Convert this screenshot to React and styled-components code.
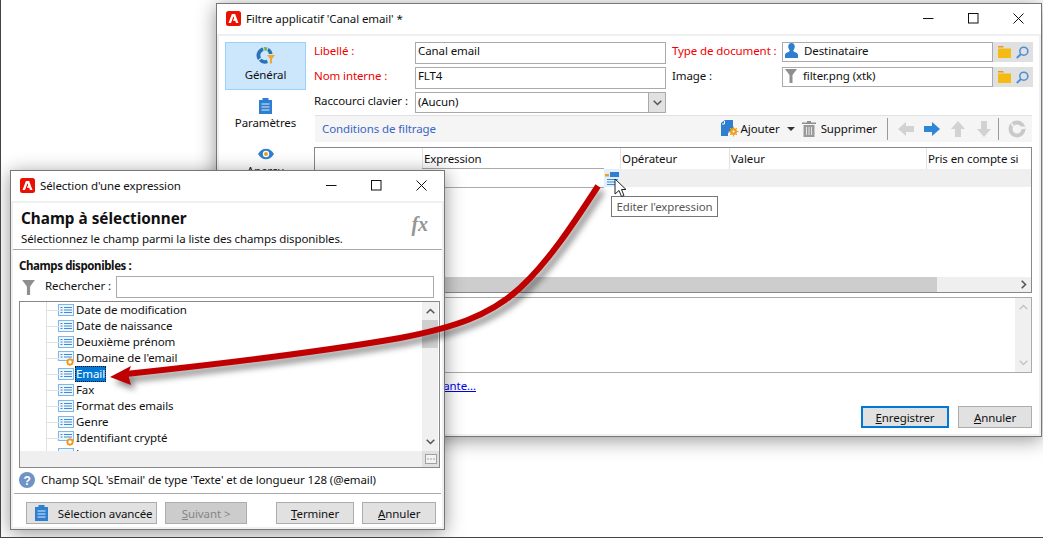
import React from 'react'
import styled, { createGlobalStyle } from 'styled-components'

const Global = createGlobalStyle`
    html, body { margin: 0; padding: 0; background: #fff; overflow: hidden; }
    body { font-family: 'Noto Sans', 'Open Sans', sans-serif; font-size: 11.5px; letter-spacing: -0.1px; color: #111; }
`

const Stage = styled.div`
    position: relative;
    width: 1043px;
    height: 538px;
    box-sizing: border-box;
    border-left: 1px solid #444;
    border-bottom: 1px solid #444;
    overflow: hidden;
    background: #fff;
`

const Window = styled.div`
    position: absolute;
    left: ${({ $x }) => $x}px;
    top: ${({ $y }) => $y}px;
    width: ${({ $w }) => $w}px;
    height: ${({ $h }) => $h}px;
    box-sizing: border-box;
    display: flex;
    flex-direction: column;
    background: #f0f0f0;
    border: 1px solid #777;
    box-shadow: 0 3px 18px rgba(0, 0, 0, 0.42);
`

const TitleBar = styled.div`
    height: 30px;
    flex: none;
    box-sizing: border-box;
    background: #fff;
    display: flex;
    align-items: center;
    padding: 0 0 2px 9px;
    gap: 5px;
`

const TitleText = styled.div`
    flex: 1;
    white-space: nowrap;
`

const WinButtons = styled.div`
    display: flex;
    align-items: center;
    padding-right: 17px;
    gap: 34px;
`

const Content = styled.div`
    flex: 1;
    min-height: 0;
    margin: 2px;
    background: #fff;
    display: flex;
    flex-direction: column;
`

const FilterBody = styled(Content)`
    flex-direction: row;
    padding: 6px 6px 0 6px;
    gap: 8px;
`

const Sidebar = styled.div`
    width: 81px;
    flex: none;
    display: flex;
    flex-direction: column;
`

const SideItem = styled.div`
    height: 48px;
    box-sizing: border-box;
    display: flex;
    flex-direction: column;
    align-items: center;
    justify-content: flex-end;
    gap: 1px;
    padding-bottom: 7px;
    background: ${({ $active }) => ($active ? '#cce6fb' : 'transparent')};
    border: 1px solid ${({ $active }) => ($active ? '#9ad0fa' : 'transparent')};
`

const Main = styled.div`
    flex: 1;
    min-width: 0;
    display: flex;
    flex-direction: column;
`

const FormGrid = styled.div`
    display: grid;
    grid-template-columns: 101px 251px 6px 110px 211px 40px;
    grid-template-rows: 22px 22px 21px;
    row-gap: 3px;
    align-items: start;
`

const Label = styled.div`
    line-height: 18px;
    white-space: nowrap;
    color: ${({ $req }) => ($req ? '#f00000' : '#111')};
    grid-column: ${({ $col }) => $col};
`

const Input = styled.div`
    box-sizing: border-box;
    height: ${({ $h }) => $h || 22}px;
    border: 1px solid #aaa;
    background: #fff;
    display: flex;
    align-items: center;
    gap: 6px;
    padding: 0 0 ${({ $pb }) => $pb || 0}px 2px;
    white-space: nowrap;
    grid-column: ${({ $col }) => $col};
`

const Combo = styled(Input)`
    justify-content: space-between;
    padding-bottom: 0;
`

const ComboText = styled.span`
    margin-bottom: 2px;
`

const ComboArrow = styled.div`
    width: 16px;
    height: 100%;
    background: #e1e1e1;
    border-left: 1px solid #aaa;
    display: flex;
    align-items: center;
    justify-content: center;
`

const PickIcons = styled.div`
    height: 20px;
    background: #e0e0e0;
    display: flex;
    align-items: center;
    justify-content: space-around;
    padding: 0 2px;
    grid-column: ${({ $col }) => $col};
`

const Toolbar = styled.div`
    height: 27px;
    box-sizing: border-box;
    margin: 2px 1px 5px 1px;
    padding: 0 6px 1px 7px;
    background: #f5f5f5;
    border-top: 1px solid #e0e0e0;
    display: flex;
    align-items: center;
`

const ToolbarTitle = styled.div`
    flex: 1;
    color: #3a66c4;
`

const ToolText = styled.div`
    margin: 0 ${({ $mr }) => $mr}px 0 ${({ $ml }) => $ml}px;
`

const ToolSep = styled.div`
    width: 1px;
    height: 22px;
    background: #999;
    margin: 0 ${({ $mr }) => $mr}px 0 ${({ $ml }) => $ml}px;
`

const CaretSlot = styled.div`
    display: flex;
    margin-right: 7px;
`

const ArrowGroup = styled.div`
    display: flex;
    gap: 10px;
`

const GridBox = styled.div`
    height: 146px;
    box-sizing: border-box;
    border: 1px solid #87878c;
    margin-right: 1px;
    display: flex;
    flex-direction: column;
`

const GridHead = styled.div`
    height: 21px;
    flex: none;
    display: grid;
    grid-template-columns: 107px 198px 109px 197px 1fr;
`

const HeadCell = styled.div`
    padding-left: 1px;
    line-height: 21px;
    white-space: nowrap;
    border-left: ${({ $first }) => ($first ? 'none' : '1px solid #e2e2e2')};
`

const GridRow = styled.div`
    height: 18px;
    flex: none;
    display: flex;
    margin-left: 107px;
    background: #efefef;
`

const ExprCell = styled.div`
    width: 182px;
    box-sizing: border-box;
    height: 20px;
    margin-top: -1px;
    background: #fff;
    border-top: 1px solid #aaa;
    border-bottom: 1px solid #aaa;
`

const EditButton = styled.div`
    width: 16px;
    background: #e3f0fb;
    display: flex;
    justify-content: center;
    padding-top: 3px;
    box-sizing: border-box;
`

const GridFill = styled.div`
    flex: 1;
`

const HScroll = styled.div`
    height: 15px;
    flex: none;
    background: #efefef;
    display: flex;
    align-items: center;
`

const HThumb = styled.div`
    width: 622px;
    height: 100%;
    background: #cdcdcd;
`

const ScrollEnd = styled.div`
    margin-left: auto;
    margin-right: 4px;
    display: flex;
`

const NoteBox = styled.div`
    height: 76px;
    box-sizing: border-box;
    margin: 4px 1px 0 0;
    border: 1px solid #aaa;
    display: flex;
    justify-content: flex-end;
`

const NoteScroll = styled.div`
    width: 16px;
    background: #f0f0f0;
    display: flex;
    flex-direction: column;
    justify-content: space-between;
    align-items: center;
    padding: 6px 0;
    box-sizing: border-box;
`

const LinkLine = styled.a`
    display: block;
    width: 162px;
    margin-top: 4px;
    height: 29px;
    line-height: 18px;
    text-align: right;
    color: #0000ee;
    text-decoration: underline;
    white-space: nowrap;
`

const FilterButtons = styled.div`
    display: flex;
    justify-content: flex-end;
    gap: 9px;
    margin-right: 1px;
`

const Button = styled.div`
    height: 22px;
    width: ${({ $w }) => $w}px;
    box-sizing: border-box;
    display: flex;
    align-items: center;
    justify-content: center;
    gap: 10px;
    white-space: nowrap;
    background: ${({ $off }) => ($off ? '#cccccc' : '#e1e1e1')};
    color: ${({ $off }) => ($off ? '#858585' : '#111')};
    border: ${({ $main }) => ($main ? '2px solid #0078d7' : '1px solid #adadad')};
    margin-left: ${({ $ml }) => $ml || 0}px;
`

const AdvancedButton = styled(Button)`
    padding-left: 4px;
`

const DialogHead = styled.div`
    height: 47px;
    flex: none;
    box-sizing: border-box;
    padding: 6px 14px 0 8px;
    border-bottom: 1px solid #a8a8a8;
    display: flex;
    justify-content: space-between;
`

const HeadTitle = styled.div`
    font-size: 15.3px;
    letter-spacing: 0;
    font-weight: 700;
    line-height: 19px;
`

const HeadSub = styled.div`
    margin-top: 3px;
    line-height: 16px;
`

const FxMark = styled.div`
    font-family: 'Liberation Serif', serif;
    font-style: italic;
    font-weight: 700;
    font-size: 20px;
    color: #959595;
    margin-top: 4px;
`

const DialogBody = styled.div`
    flex: none;
    padding: 7px 2px 0 6px;
`

const SectionTitle = styled.div`
    font-weight: 700;
    letter-spacing: -0.4px;
    line-height: 17px;
`

const SearchRow = styled.div`
    display: flex;
    align-items: center;
    margin-top: 2px;
    padding-left: 3px;
    height: 22px;
`

const SearchLabel = styled.div`
    width: 71px;
    margin: 0 0 4px 10px;
`

const SearchInput = styled.div`
    width: 318px;
    height: 22px;
    box-sizing: border-box;
    border: 1px solid #aaa;
`

const TreeBox = styled.div`
    width: 421px;
    height: 167px;
    box-sizing: border-box;
    margin-top: 3px;
    border: 1px solid #87878c;
    display: flex;
    flex-direction: column;
`

const TreeMain = styled.div`
    height: 149px;
    flex: none;
    display: flex;
`

const TreeList = styled.div`
    flex: 1;
    overflow: hidden;
    padding-left: 38px;
`

const TreeRow = styled.div`
    position: relative;
    height: 16px;
    display: flex;
    align-items: center;
    white-space: nowrap;
    gap: 1px;
    &::before {
        content: '';
        position: absolute;
        left: -12px;
        top: 0;
        bottom: 0;
        width: 12px;
        border-left: 1px solid #e0e0e0;
        background: linear-gradient(#e0e0e0, #e0e0e0) no-repeat 0 8px / 12px 1px;
    }
`

const RowText = styled.span`
    padding: 0 1px;
    line-height: 16px;
    height: 16px;
    box-sizing: border-box;
    ${({ $selected }) => $selected && `
        background: #0078d7;
        color: #fff;
        outline: 1px dotted #111;
        outline-offset: -1px;
    `}
`

const TreeScroll = styled.div`
    width: 16px;
    flex: none;
    margin-right: 1px;
    background: #f0f0f0;
    box-sizing: border-box;
    padding: 6px 0;
    display: flex;
    flex-direction: column;
    align-items: center;
    justify-content: space-between;
    position: relative;
`

const TreeThumb = styled.div`
    position: absolute;
    top: 18px;
    left: 0;
    width: 16px;
    height: 28px;
    background: #cfcfcf;
`

const TreeFoot = styled.div`
    flex: 1;
    background: #efefef;
    display: flex;
    justify-content: flex-end;
`

const DotsButton = styled.div`
    width: 17px;
    background: #e0e0e0;
    display: flex;
    align-items: center;
    justify-content: center;
`

const HelpRow = styled.div`
    height: 25px;
    box-sizing: border-box;
    padding-bottom: 2px;
    display: flex;
    align-items: center;
    gap: 6px;
`

const DialogFoot = styled.div`
    flex: 1;
    margin: 0 1px;
    border-top: 1px solid #a8a8a8;
    padding: 8px 5px 0 12px;
    display: flex;
    align-items: flex-start;
    gap: 8px;
`

const Tooltip = styled.div`
    position: absolute;
    left: 610px;
    top: 196px;
    width: 107px;
    height: 21px;
    box-sizing: border-box;
    border: 1px solid #767676;
    background: #fff;
    color: #575757;
    display: flex;
    align-items: center;
    justify-content: center;
    white-space: nowrap;
`

const ArrowOverlay = styled.svg`
    position: absolute;
    left: -1px;
    top: 0;
    pointer-events: none;
    filter: drop-shadow(4px 5px 3px rgba(0, 0, 0, 0.45));
`

const Cursor = styled.svg`
    position: absolute;
    left: 613px;
    top: 178px;
`

const BrandIcon = () => (
    <svg width="15" height="15" viewBox="0 0 15 15">
        <rect width="15" height="15" rx="2.5" fill="#eb1000" />
        <path d="M5.9 3h3.2l3.4 9h-2.5l-.8-2.3H6.900L8.200 7 7.500 5.200 5 12H2.500z" fill="#fff" />
    </svg>
)

const MinIcon = () => (
    <svg width="11" height="11" viewBox="0 0 11 11">
        <path d="M0 5.500h10.500" stroke="#111" fill="none" />
    </svg>
)

const MaxIcon = () => (
    <svg width="11" height="11" viewBox="0 0 11 11">
        <rect x=".5" y=".5" width="9.500" height="9.500" stroke="#111" fill="none" />
    </svg>
)

const CloseIcon = () => (
    <svg width="11" height="11" viewBox="0 0 11 11">
        <path d="M.5.5l10 10M10.500.5l-10 10" stroke="#111" fill="none" />
    </svg>
)

const GeneralIcon = () => (
    <svg width="22" height="20" viewBox="0 0 22 20">
        <path d="M8 1.500a8 8 0 0 0-5 12.500l3-2.400A4.500 4.500 0 0 1 8.500 5z" fill="#2d72b8" />
        <path d="M9 1a8 8 0 0 1 3.500.6L11.300 5A4.500 4.500 0 0 0 9.500 4.600z" fill="#6cb33f" />
        <path d="M13.500 2a8 8 0 0 1 4 6h-3.600a4.500 4.500 0 0 0-1.700-3z" fill="#2d72b8" />
        <path d="M3.800 14.800A8 8 0 0 0 13 17l-1.300-3.300a4.500 4.500 0 0 1-5-1z" fill="#2d72b8" />
        <path d="M12 9h8l-3 4v4l-2 1v-5z" fill="#f0a92a" />
    </svg>
)

const ClipboardIcon = () => (
    <svg width="13" height="16" viewBox="0 0 13 16">
        <path d="M0 2h3.500V0h6v2H13v14H0z" fill="#2f7fd0" />
        <path d="M2.500 6h8M2.500 9h8M2.500 12h8" stroke="#dcebf9" strokeWidth="1.200" />
    </svg>
)

const EyeIcon = () => (
    <svg width="16" height="16" viewBox="0 0 16 16">
        <path d="M0 8c4-7 12-7 16 0-4 7-12 7-16 0z" fill="#2f7fd0" />
        <circle cx="8" cy="8" r="3.200" fill="#fff" />
        <circle cx="8" cy="8" r="2" fill="#f0a020" />
    </svg>
)

const PersonIcon = () => (
    <svg width="13" height="15" viewBox="0 0 13 15">
        <path d="M6.500 0c2 0 3.300 1.500 3.300 3.600 0 1.500-.7 2.800-1.400 3.600-.2.800.3 1.300 1.300 1.700 1.900.7 3.300 1.300 3.300 3V15H0v-3.100c0-1.700 1.400-2.300 3.300-3 1-.4 1.500-.9 1.300-1.700-.7-.8-1.400-2.100-1.400-3.600C3.200 1.500 4.500 0 6.500 0z" fill="#2f7fd0" />
    </svg>
)

const FunnelIcon = ({ w = 12, h = 14 }) => (
    <svg width={w} height={h} viewBox="0 0 12 14">
        <path d="M0 0h12L7.500 6v8h-3V6z" fill="#8f8f8f" />
    </svg>
)

const FolderIcon = () => (
    <svg width="13" height="12" viewBox="0 0 13 12">
        <path d="M0 0h5l1 1.500H0z" fill="#e99a1c" />
        <path d="M0 2.500h13V12H0z" fill="#f3bb13" />
    </svg>
)

const SearchIcon = () => (
    <svg width="13" height="13" viewBox="0 0 13 13">
        <circle cx="7.800" cy="5.200" r="4" stroke="#4a90d9" strokeWidth="1.600" fill="none" />
        <path d="M5 8L.8 12" stroke="#4a90d9" strokeWidth="2" />
    </svg>
)

const ChevronDown = ({ color = '#555' }) => (
    <svg width="9" height="6" viewBox="0 0 9 6">
        <path d="M.7 .7L4.500 4.500 8.300 .7" stroke={color} strokeWidth="1.500" fill="none" />
    </svg>
)

const ChevronUp = ({ color = '#555' }) => (
    <svg width="9" height="6" viewBox="0 0 9 6">
        <path d="M.7 5.300L4.500 1.500 8.300 5.300" stroke={color} strokeWidth="1.500" fill="none" />
    </svg>
)

const ChevronRight = () => (
    <svg width="6" height="9" viewBox="0 0 6 9">
        <path d="M.7 .7L4.500 4.500 .7 8.300" stroke="#555" strokeWidth="1.600" fill="none" />
    </svg>
)

const AddIcon = () => (
    <svg width="18" height="17" viewBox="0 0 18 17">
        <path d="M0 3l4-3h8v10l-5 3v3H0z" fill="#2f7fd0" />
        <path d="M3.500 1v3H1" stroke="#fff" fill="none" />
        <circle cx="12.500" cy="11.500" r="3.500" fill="#f0a020" />
        <path d="M12.500 6.500v10M7.500 11.500h10M9 8l7 7M16 8l-7 7" stroke="#f0a020" />
        <circle cx="12.500" cy="11.500" r="1" fill="#fff" />
    </svg>
)

const CaretIcon = () => (
    <svg width="8" height="4" viewBox="0 0 8 4">
        <path d="M0 0h8L4 4z" fill="#333" />
    </svg>
)

const TrashIcon = () => (
    <svg width="14" height="16" viewBox="0 0 14 16">
        <path d="M5 0h4v1.500h5V3H0V1.500h5z" fill="#8f8f8f" />
        <path d="M1.500 4h11v12h-11z" fill="#9a9a9a" />
        <path d="M4.500 6v8M7 6v8M9.500 6v8" stroke="#e6e6e6" />
    </svg>
)

const MoveArrow = ({ dir, color }) => {
    const rot = { left: 180, right: 0, up: -90, down: 90 }[dir]
    return (
        <svg width="16" height="16" viewBox="0 0 16 16">
            <path transform={`rotate(${rot} 8 8)`} d="M0 5h8V1l8 7-8 7v-4H0z" fill={color} />
        </svg>
    )
}

const RefreshIcon = () => (
    <svg width="18" height="18" viewBox="0 0 18 18">
        <circle cx="9" cy="9" r="6.500" stroke="#c9c9c9" strokeWidth="4" fill="none" />
        <path d="M9 6.500h8v2.500H9zM3 2l3 3-2 2z" fill="#f5f5f5" />
    </svg>
)

const ExprIcon = () => (
    <svg width="14" height="14" viewBox="0 0 14 14">
        <rect x="0" y="2" width="4" height="2.500" fill="#f0a020" />
        <rect x="5" y="0" width="9" height="5" fill="#2f7fd0" />
        <path d="M2 7.500h11M2 10h11M2 12.500h11" stroke="#3c8ad8" strokeWidth="1.200" />
    </svg>
)

const FieldIcon = ({ gear }) => (
    <svg width="16" height="15" viewBox="0 0 16 15">
        <rect x=".5" y={gear ? 0.5 : 1.5} width="15" height={gear ? 9 : 11} fill="#eef6fd" stroke="#82b4e6" />
        <path d={gear ? 'M6 3.500h8M6 6h8' : 'M6 4.500h8M6 7h8M6 9.500h8'} stroke="#3c8ad8" />
        <path d={gear ? 'M2.500 3.500h2M2.500 6h2' : 'M2.500 4.500h2M2.500 7h2M2.500 9.500h2'} stroke="#3c8ad8" />
        {gear && (
            <g>
                <circle cx="12" cy="11" r="2.600" fill="#fff" stroke="#ef9a17" strokeWidth="1.700" />
                <path d="M12 7.300v1.200M12 13.500v1.200M8.300 11h1.200M14.500 11h1.200M9.400 8.400l.8.800M13.800 12.800l.8.800M14.600 8.400l-.8.800M10.200 12.800l-.8.800" stroke="#ef9a17" />
            </g>
        )}
    </svg>
)

const HelpIcon = () => (
    <svg width="16" height="16" viewBox="0 0 16 16">
        <circle cx="8" cy="8" r="8" fill="#6f93c6" />
        <text x="8" y="12.500" textAnchor="middle" fontSize="12" fontWeight="700" fill="#fff" fontFamily="Liberation Sans, sans-serif">?</text>
    </svg>
)

const DotsIcon = () => (
    <svg width="12" height="10" viewBox="0 0 12 10">
        <rect x=".5" y=".5" width="11" height="9" fill="#f2f2f2" stroke="#a0a0a0" />
        <path d="M2.500 5h1M5.500 5h1M8.500 5h1" stroke="#555" />
    </svg>
)

const fields = [
    { name: 'Date de modification' },
    { name: 'Date de naissance' },
    { name: 'Deuxième prénom' },
    { name: "Domaine de l'email", gear: true },
    { name: 'Email', selected: true },
    { name: 'Fax' },
    { name: 'Format des emails' },
    { name: 'Genre' },
    { name: 'Identifiant crypté', gear: true },
    { name: 'Langue' },
]

const WindowControls = () => (
    <WinButtons>
        <MinIcon />
        <MaxIcon />
        <CloseIcon />
    </WinButtons>
)

const FilterWindow = () => (
    <Window $x={215} $y={3} $w={826} $h={434}>
        <TitleBar>
            <BrandIcon />
            <TitleText>Filtre applicatif 'Canal email' *</TitleText>
            <WindowControls />
        </TitleBar>
        <FilterBody>
            <Sidebar>
                <SideItem $active>
                    <GeneralIcon />
                    Général
                </SideItem>
                <SideItem>
                    <ClipboardIcon />
                    Paramètres
                </SideItem>
                <SideItem>
                    <EyeIcon />
                    Aperçu
                </SideItem>
            </Sidebar>
            <Main>
                <FormGrid>
                    <Label $req $col={1}>Libellé :</Label>
                    <Input $col={2} $pb={5}>Canal email</Input>
                    <Label $req $col={4}>Type de document :</Label>
                    <Input $col={5} $h={20} $pb={3}><PersonIcon />Destinataire</Input>
                    <PickIcons $col={6}><FolderIcon /><SearchIcon /></PickIcons>

                    <Label $req $col={1}>Nom interne :</Label>
                    <Input $col={2} $pb={5}>FLT4</Input>
                    <Label $col={4}>Image :</Label>
                    <Input $col={5} $h={20} $pb={3}><FunnelIcon />filter.png (xtk)</Input>
                    <PickIcons $col={6}><FolderIcon /><SearchIcon /></PickIcons>

                    <Label $col={1}>Raccourci clavier :</Label>
                    <Combo $col={2} $h={21}><ComboText>(Aucun)</ComboText><ComboArrow><ChevronDown /></ComboArrow></Combo>
                </FormGrid>
                <Toolbar>
                    <ToolbarTitle>Conditions de filtrage</ToolbarTitle>
                    <AddIcon />
                    <ToolText $ml={2} $mr={7}>Ajouter</ToolText>
                    <CaretSlot><CaretIcon /></CaretSlot>
                    <TrashIcon />
                    <ToolText $ml={5} $mr={5}>Supprimer</ToolText>
                    <ToolSep $ml={5} $mr={10} />
                    <ArrowGroup>
                        <MoveArrow dir="left" color="#d2d2d2" />
                        <MoveArrow dir="right" color="#2f86d8" />
                        <MoveArrow dir="up" color="#d2d2d2" />
                        <MoveArrow dir="down" color="#d2d2d2" />
                    </ArrowGroup>
                    <ToolSep $ml={6} $mr={9} />
                    <RefreshIcon />
                </Toolbar>
                <GridBox>
                    <GridHead>
                        <HeadCell $first />
                        <HeadCell>Expression</HeadCell>
                        <HeadCell>Opérateur</HeadCell>
                        <HeadCell>Valeur</HeadCell>
                        <HeadCell>Pris en compte si</HeadCell>
                    </GridHead>
                    <GridRow>
                        <ExprCell />
                        <EditButton><ExprIcon /></EditButton>
                    </GridRow>
                    <GridFill />
                    <HScroll>
                        <HThumb />
                        <ScrollEnd><ChevronRight /></ScrollEnd>
                    </HScroll>
                </GridBox>
                <NoteBox>
                    <NoteScroll>
                        <ChevronUp color="#c4c4c4" />
                        <ChevronDown color="#c4c4c4" />
                    </NoteScroll>
                </NoteBox>
                <LinkLine>Aller à l'étape suivante...</LinkLine>
                <FilterButtons>
                    <Button $main $w={88}><span><u>E</u>nregistrer</span></Button>
                    <Button $w={74}><span><u>A</u>nnuler</span></Button>
                </FilterButtons>
            </Main>
        </FilterBody>
    </Window>
)

const ExpressionDialog = () => (
    <Window $x={9} $y={170} $w={435} $h={360}>
        <TitleBar>
            <BrandIcon />
            <TitleText>Sélection d'une expression</TitleText>
            <WindowControls />
        </TitleBar>
        <Content>
            <DialogHead>
                <div>
                    <HeadTitle>Champ à sélectionner</HeadTitle>
                    <HeadSub>Sélectionnez le champ parmi la liste des champs disponibles.</HeadSub>
                </div>
                <FxMark>fx</FxMark>
            </DialogHead>
            <DialogBody>
                <SectionTitle>Champs disponibles :</SectionTitle>
                <SearchRow>
                    <FunnelIcon w={13} h={15} />
                    <SearchLabel>Rechercher :</SearchLabel>
                    <SearchInput />
                </SearchRow>
                <TreeBox>
                    <TreeMain>
                        <TreeList>
                            {fields.map((f) => (
                                <TreeRow key={f.name}>
                                    <FieldIcon gear={f.gear} />
                                    <RowText $selected={f.selected}>{f.name}</RowText>
                                </TreeRow>
                            ))}
                        </TreeList>
                        <TreeScroll>
                            <TreeThumb />
                            <ChevronUp />
                            <ChevronDown />
                        </TreeScroll>
                    </TreeMain>
                    <TreeFoot>
                        <DotsButton><DotsIcon /></DotsButton>
                    </TreeFoot>
                </TreeBox>
                <HelpRow>
                    <HelpIcon />
                    Champ SQL 'sEmail' de type 'Texte' et de longueur 128 (@email)
                </HelpRow>
            </DialogBody>
            <DialogFoot>
                <AdvancedButton $w={132}><ClipboardIcon />Sélection avancée</AdvancedButton>
                <Button $off $w={82}><span><u>S</u>uivant &gt;</span></Button>
                <Button $w={79} $ml={21}><span><u>T</u>erminer</span></Button>
                <Button $w={74}><span><u>A</u>nnuler</span></Button>
            </DialogFoot>
        </Content>
    </Window>
)

const Arrow = () => (
    <ArrowOverlay width="1043" height="538" viewBox="0 0 1043 538">
        <path d="M598 186C572 226 548 262 520 288C490 316 452 328 400 338C320 352 220 364 126 374" stroke="#c00000" strokeWidth="6" fill="none" />
        <path d="M110 377L131 366L128 374L131 385z" fill="#c00000" />
    </ArrowOverlay>
)

const App = () => (
    <Stage>
        <Global />
        <FilterWindow />
        <ExpressionDialog />
        <Arrow />
        <Tooltip>Editer l'expression</Tooltip>
        <Cursor width="13" height="20" viewBox="0 0 13 20">
            <path d="M1 1v15l4-3.500 2.500 6 2.500-1-2.500-6H12z" fill="#fff" stroke="#222" />
        </Cursor>
    </Stage>
)

export default App
